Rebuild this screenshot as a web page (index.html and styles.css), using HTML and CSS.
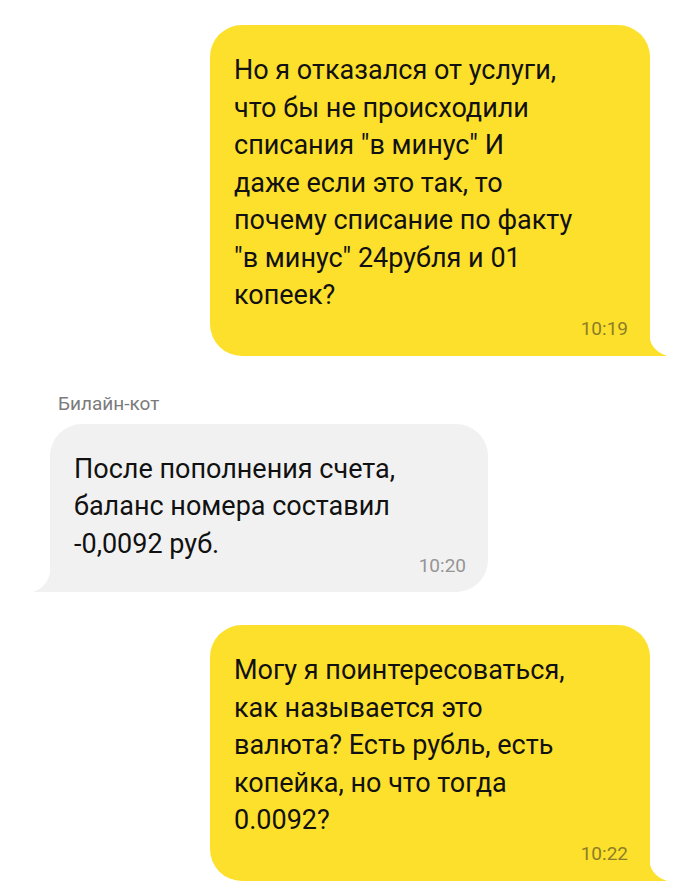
FILE: index.html
```html
<!DOCTYPE html>
<html lang="ru">
<head>
  <meta charset="UTF-8">
  <title>Чат</title>
  <link rel="stylesheet" href="styles.css">
</head>
<body>
  <div class="chat">

    <div class="msg out">
      <div class="bubble">
        <p class="text">Но я отказался от услуги,<br>что бы не происходили<br>списания "в минус" И<br>даже если это так, то<br>почему списание по факту<br>"в минус" 24рубля и 01<br>копеек?</p>
        <div class="time">10:19</div>
        <svg class="tail" width="18" height="24" viewBox="0 0 18 24"><path d="M0 0 C0 12 6 20 18 24 L0 24 Z"/></svg>
      </div>
    </div>

    <div class="msg in">
      <div class="author">Билайн-кот</div>
      <div class="bubble">
        <p class="text">После пополнения счета,<br>баланс номера составил<br>-0,0092 руб.</p>
        <div class="time">10:20</div>
        <svg class="tail" width="18" height="28" viewBox="0 0 18 28"><path d="M18 0 C18 14 12 24 0 28 L18 28 Z"/></svg>
      </div>
    </div>

    <div class="msg out">
      <div class="bubble">
        <p class="text">Могу я поинтересоваться,<br>как называется это<br>валюта? Есть рубль, есть<br>копейка, но что тогда<br>0.0092?</p>
        <div class="time">10:22</div>
        <svg class="tail" width="18" height="24" viewBox="0 0 18 24"><path d="M0 0 C0 12 6 20 18 24 L0 24 Z"/></svg>
      </div>
    </div>

  </div>
</body>
</html>
```

FILE: styles.css
```css
body {
  margin: 0;
  background-color: white;
  font-family: Roboto, "Noto Sans", sans-serif;
  color: #111;
}

.chat {
  display: flex;
  flex-direction: column;
  padding: 25px 50px 0 50px;
}

.msg {
  display: flex;
  flex-direction: column;
}

.msg.out {
  align-items: flex-end;
}

.msg.in {
  align-items: flex-start;
  margin-top: 37px;
}

.msg.in + .msg.out {
  margin-top: 33px;
}

.author {
  font-size: 19px;
  color: #7b7b7b;
  margin: 0 0 9px 8px;
  line-height: 22px;
}

.bubble {
  position: relative;
  box-sizing: border-box;
  padding: 27px 22px 17px 24px;
  border-radius: 32px;
}

.out .bubble {
  width: 440px;
  background-color: #fde02c;
  border-bottom-right-radius: 0;
}

.in .bubble {
  width: 438px;
  background-color: #f1f1f1;
  border-bottom-left-radius: 0;
  padding-bottom: 16px;
}

.text {
  margin: 0;
  font-size: 27px;
  line-height: 37.5px;
  white-space: nowrap;
}

.time {
  text-align: right;
  font-size: 19px;
  line-height: 20px;
  margin-top: 4px;
}

.out .time {
  color: #8c7e26;
}

.in .time {
  color: #959595;
  margin-top: -7px;
}

.tail {
  position: absolute;
  bottom: 0;
}

.out .tail {
  right: -17px;
  fill: #fde02c;
}

.in .tail {
  left: -17px;
  fill: #f1f1f1;
}
```
